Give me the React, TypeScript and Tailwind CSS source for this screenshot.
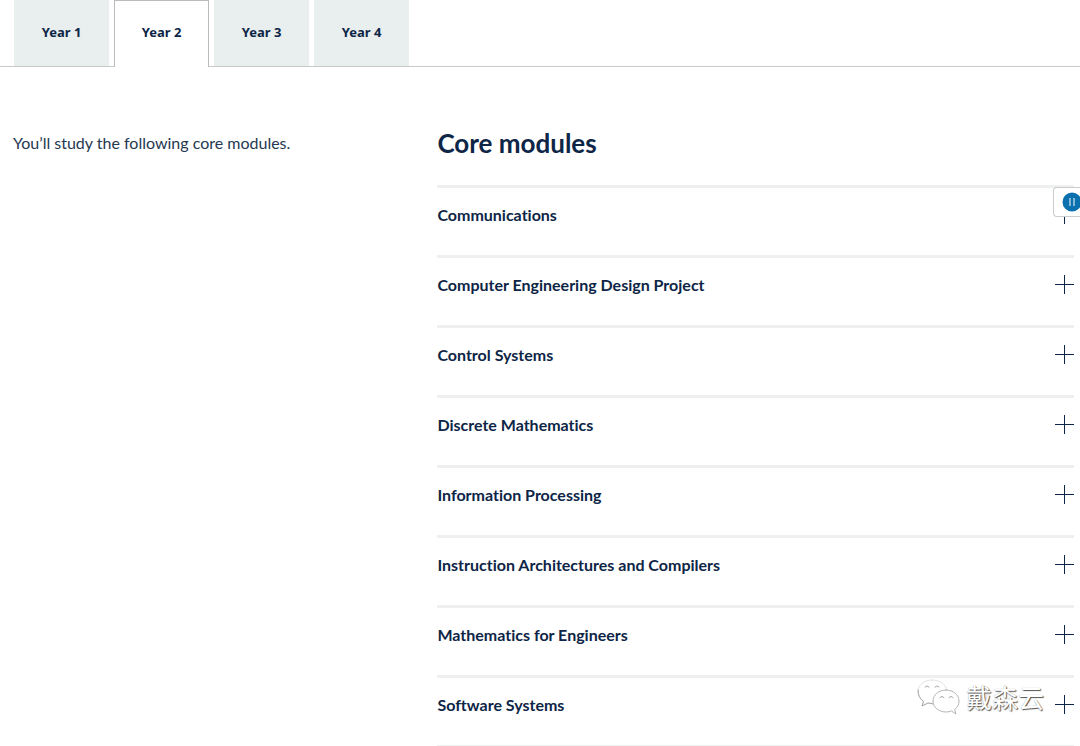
import { useState } from "react";
import clsx from "clsx";

const YEARS = ["Year 1", "Year 2", "Year 3", "Year 4"];

const MODULES = [
  "Communications",
  "Computer Engineering Design Project",
  "Control Systems",
  "Discrete Mathematics",
  "Information Processing",
  "Instruction Architectures and Compilers",
  "Mathematics for Engineers",
  "Software Systems"
];

interface YearTabsProps {
  active: string;
  onChange: (year: string) => void;
}

const YearTabs = ({ active, onChange }: YearTabsProps) => (
  <div
    role="tablist"
    className="flex gap-[5px] border-b border-[#c8c9ca] pl-3.5 font-['Noto_Sans',sans-serif]"
  >
    {YEARS.map(year => (
      <button
        key={year}
        type="button"
        role="tab"
        aria-selected={year === active}
        onClick={() => onChange(year)}
        className={clsx(
          "w-[95px] cursor-pointer text-[13px] leading-5 font-bold",
          year === active
            ? "-mb-px h-[67px] border border-b-0 border-[#b9bbbd] bg-white pb-1"
            : "h-[66px] bg-[#e9eeee] pb-0.5"
        )}
      >
        {year}
      </button>
    ))}
  </div>
);

const PlusIcon = () => (
  <svg
    viewBox="0 0 19 19"
    className="size-[19px]"
    fill="none"
    stroke="currentColor"
    aria-hidden="true"
  >
    <path d="M9.5 0v19M0 9.5h19" />
  </svg>
);

const ModuleRow = ({ name }: { name: string }) => {
  const [open, setOpen] = useState<boolean>(false);

  return (
    <li className="border-t-3 border-[#eeefef]">
      <h3>
        <button
          type="button"
          aria-expanded={open}
          onClick={() => setOpen(!open)}
          className="flex h-[67px] w-full cursor-pointer items-center justify-between pb-3.5 text-left text-base font-bold"
        >
          {name}
          <PlusIcon />
        </button>
      </h3>
    </li>
  );
};

const PauseButton = () => (
  <button
    type="button"
    aria-label="Pause"
    className="absolute top-[187px] right-0 flex h-[30px] w-[27px] cursor-pointer items-center overflow-hidden rounded-l border border-r-0 border-[#c9cbcd] bg-white pl-2"
  >
    <svg viewBox="0 0 20 20" className="size-5 shrink-0" aria-hidden="true">
      <circle cx="10" cy="10" r="9.5" fill="#0a70ae" />
      <path d="M8 6v8M12 6v8" stroke="#d5e8f3" strokeWidth="1.2" />
    </svg>
  </button>
);

const Watermark = () => (
  <div className="pointer-events-none absolute top-[678px] right-9 flex items-center gap-1.5">
    <svg
      viewBox="0 0 44 38"
      className="h-[38px] w-11"
      fill="white"
      strokeLinecap="round"
      strokeLinejoin="round"
      aria-hidden="true"
    >
      <path
        d="M16 2C8 2 2 7 2 14c0 4 2 7 5.500 9.500L6 28l6-3c2 .7 4 .9 7 .8C31 25 32 18 30.500 11 28.500 5 23 2 16 2z"
        stroke="#e2e3e4"
      />
      <path
        d="M2 12c0 5 2 9 5.500 11.500L6 28l6-3 5 .8"
        fill="none"
        stroke="#a8a9ab"
      />
      <path d="M9 9q2-2.500 4 0M19 9q2-2.500 4 0" stroke="#a3a5a7" />
      <path
        d="M30 12c-7.500 0-13 5-13 11s5.500 11 13 11c2 0 4-.4 5.500-1l4.500 3-1.300-4.500C41.500 29.500 43 26.500 43 23c0-6-5.500-11-13-11z"
        stroke="#b4b6b8"
      />
      <path d="M24 19.500q2-2.500 4 0M33 19.500q2-2.500 4 0" stroke="#a3a5a7" />
    </svg>
    <span className="font-['Noto_Sans_CJK_SC',sans-serif] text-[26px] leading-9 text-white [text-shadow:1px_1px_1px_#555,0_0_1px_#999]">
      戴森云
    </span>
  </div>
);

export default function App() {
  const [year, setYear] = useState<string>("Year 2");

  return (
    <div className="relative min-h-screen overflow-hidden bg-white font-[Lato,sans-serif] text-[#0d2546] [font-variant-ligatures:none]">
      <YearTabs active={year} onChange={setYear} />

      <main className="grid grid-cols-[2fr_3fr] pt-[58px] pr-1.5 pl-[13px]">
        <p className="pt-1.5 text-base text-[#24384f]">
          You’ll study the following core modules.
        </p>

        <section>
          <h2 className="pb-6 text-[26px] leading-9 font-bold">
            Core modules
          </h2>
          <ul className="border-b-3 border-[#eeefef]">
            {MODULES.map(name => (
              <ModuleRow key={name} name={name} />
            ))}
          </ul>
        </section>
      </main>

      <PauseButton />
      <Watermark />
    </div>
  );
}
